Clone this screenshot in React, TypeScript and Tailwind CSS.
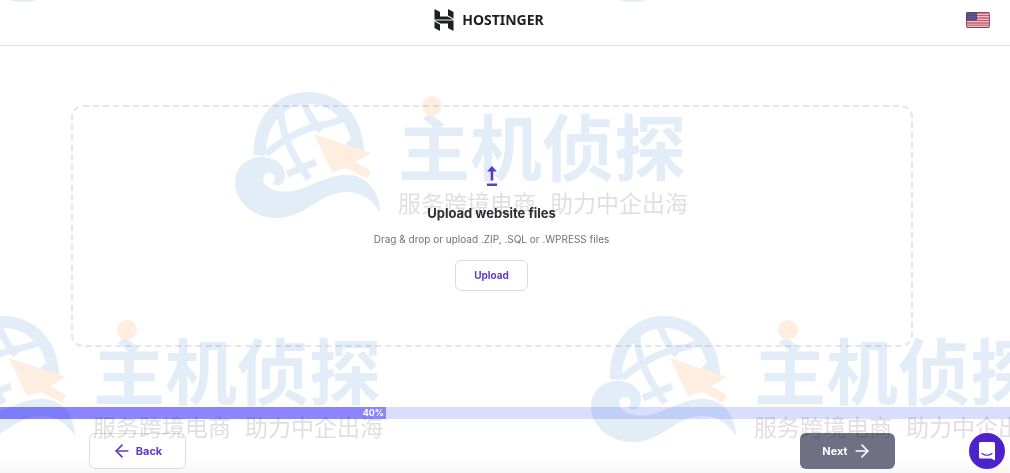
import React from "react";
import { ArrowLeft, ArrowRight } from "lucide-react";

const stamps = [
  { x: -70, y: 316 },
  { x: 235, y: 92 },
  { x: 591, y: 316 },
];

const waveTips = [
  { x: -19, y: -124 },
  { x: 591, y: -124 },
];

function GlobeWave() {
  return (
    <svg viewBox="0 0 146 128" className="h-[128px] w-[146px] shrink-0" aria-hidden="true">
      <g fill="#e2edf8">
        <path d="M19 63 C17 30 38 0 73 0 C105 0 129 25 129 60 L112 54 L111 51 L116 47 C111 28 96 12 73 12 C50 12 33 31 31 58 L30 64 Z" />
        <path d="M0 91 C0 76 11 65 27 65 C42 65 50 75 50 83 C50 93 42 96 37 91 C42 88 40 81 34 81 C29 81 26 86 30 92 C36 100 50 101 62 98 C81 93 91 83 112 83 C134 83 145 102 145 120 C135 105 122 97 103 101 C80 106 68 126 42 126 C16 126 0 108 0 91 Z" />
      </g>
      <g fill="none" stroke="#e2edf8" strokeWidth="7">
        <path d="M31 62 Q58 39 86 33 Q100 31 111 25" />
        <path d="M46 20 C46 39 56 62 74 87" />
        <path d="M69 11 Q76 28 86 39" />
        <path d="M52 82 L81 70" />
      </g>
      <path d="M79 42 L136 61 L120 70 L136 79 L132 87 L112 76 L97 80 Z" fill="#fdeee0" />
    </svg>
  );
}

function Stamp({ x, y }: { x: number; y: number }) {
  return (
    <div className="absolute flex w-[460px] gap-[17px] whitespace-nowrap" style={{ left: x, top: y }}>
      <GlobeWave />
      <div className="relative pt-2.5">
        <span className="absolute left-6 top-1 size-5 rounded-full bg-[#fdeee0]" />
        <div className="text-[72px] leading-[84px] font-bold text-[#e2edf8]">主机侦探</div>
        <div className="flex gap-[14px] text-[23px] leading-8 text-[#dfdfdf]">
          <span>服务跨境电商</span>
          <span>助力中企出海</span>
        </div>
      </div>
    </div>
  );
}

function Watermark() {
  return (
    <div
      aria-hidden="true"
      className="pointer-events-none absolute inset-0 overflow-hidden font-['Noto_Sans_CJK_SC',sans-serif] mix-blend-multiply"
    >
      {waveTips.map((w) => (
        <div key={w.x} className="absolute" style={{ left: w.x, top: w.y }}>
          <GlobeWave />
        </div>
      ))}
      {stamps.map((s) => (
        <Stamp key={s.x} x={s.x} y={s.y} />
      ))}
    </div>
  );
}

function Logo() {
  return (
    <a href="#" className="flex items-center gap-2 text-[#1d1e20]">
      <svg viewBox="0 0 20 22" className="h-[22px] w-5" fill="currentColor" aria-hidden="true">
        <path d="M0.5 10.5 V0 L6 3 V7.5 L13.5 7.6 L19.5 10.5 Z" />
        <path d="M14 6.5 V0 L19.5 3 V9.5 Z" />
        <path d="M19.5 11.5 V22 L14 19 V14.5 L6.5 14.4 L0.5 11.5 Z" />
        <path d="M6 15.5 V22 L0.5 19 V12.5 Z" />
      </svg>
      <span className="text-[14px] leading-5 font-bold font-['Noto_Sans',sans-serif]">HOSTINGER</span>
    </a>
  );
}

function Flag() {
  return (
    <svg viewBox="0 0 24 16" className="h-4 w-6" aria-hidden="true">
      <clipPath id="flag">
        <rect width="24" height="16" rx="2" />
      </clipPath>
      <g clipPath="url(#flag)">
        <rect width="24" height="16" fill="#f3e3e7" />
        <path d="M0 1H24M0 3.5H24M0 6H24M0 8.5H24M0 11H24M0 13.2H24M0 15.5H24" stroke="#c8536a" strokeWidth="1.3" />
        <rect width="11" height="8.5" fill="#4b4a80" />
        <path d="M1.5 2H10M1.5 4.3H10M1.5 6.6H10" stroke="#8b8bb0" strokeWidth=".8" strokeDasharray="1 1" />
      </g>
      <rect x=".5" y=".5" width="23" height="15" rx="2" fill="none" stroke="#5d3e5c" strokeOpacity=".7" />
    </svg>
  );
}

export default function App() {
  return (
    <div className="relative flex min-h-screen flex-col overflow-hidden bg-white font-['Inter',sans-serif] text-[#2f3037]">
      <header className="grid h-[46px] grid-cols-[1fr_auto_1fr] items-center border-b border-[#dedfe3] pr-8 pb-1.5">
        <span />
        <Logo />
        <button type="button" aria-label="Language" className="-mr-3 justify-self-end">
          <Flag />
        </button>
      </header>

      <main className="flex flex-1 flex-col pt-[59px] pr-[27px]">
        <section className="mx-auto flex w-full max-w-[842px] flex-col items-center rounded-xl border-2 border-dashed border-[#e6e4f3] pt-[58px] pb-[54px]">
          <svg viewBox="0 0 12 22" className="h-[22px] w-3" fill="#5c3dc6" aria-hidden="true">
            <path d="M6 1 L11 6.5 H7.3 V15.5 H4.7 V6.5 H1 Z" />
            <rect x="1" y="18.5" width="10" height="2.5" />
          </svg>
          <h1 className="mt-4 text-[13px] leading-5 font-bold">Upload website files</h1>
          <p className="mt-2 text-[10px] leading-4 text-[#6d7081]">Drag &amp; drop or upload .ZIP, .SQL or .WPRESS files</p>
          <button
            type="button"
            className="mt-[13px] h-[31px] w-[73px] rounded-md border border-[#dadce0] text-[10px] font-bold text-[#5c3dc6]"
          >
            Upload
          </button>
        </section>
      </main>

      <div
        role="progressbar"
        aria-label="Progress"
        aria-valuenow={40}
        aria-valuemin={0}
        aria-valuemax={100}
        className="h-3 bg-[#d9deff]"
      >
        <div className="flex h-3 w-[386px] items-center justify-end bg-[#8c85ff] pr-0.5 text-[9px] font-bold text-white">
          40%
        </div>
      </div>

      <footer className="bg-linear-to-b from-white from-70% to-[#f7f7f7] pt-3.5 pr-[27px] pb-1">
        <div className="mx-auto flex w-full max-w-[806px] justify-between text-[11px] font-bold">
          <button
            type="button"
            className="flex h-9 w-[97px] items-center justify-center gap-1 rounded-md border border-[#dadce0] bg-white text-[#5c3dc6]"
          >
            <ArrowLeft size={20} strokeWidth={2} />
            Back
          </button>
          <button
            type="button"
            className="flex h-9 w-[95px] items-center justify-center gap-1 rounded-md bg-[#6f7083] text-white"
          >
            Next
            <ArrowRight size={20} strokeWidth={2} />
          </button>
        </div>
      </footer>

      <Watermark />

      <button
        type="button"
        aria-label="Open chat"
        className="absolute right-[5px] bottom-1 flex size-9 items-center justify-center rounded-full bg-[#4d22cc]"
      >
        <svg viewBox="0 0 18 20" className="h-5 w-[18px]" aria-hidden="true">
          <path d="M2.5 1 H15.5 Q17 1 17 2.5 V19.5 L13 17.5 H2.5 Q1 17.5 1 16 V2.5 Q1 1 2.5 1Z" fill="#fff" />
          <path d="M4 12.5 Q9 16 14 12.5" fill="none" stroke="#4d22cc" strokeWidth="1.2" strokeLinecap="round" />
        </svg>
      </button>
    </div>
  );
}
